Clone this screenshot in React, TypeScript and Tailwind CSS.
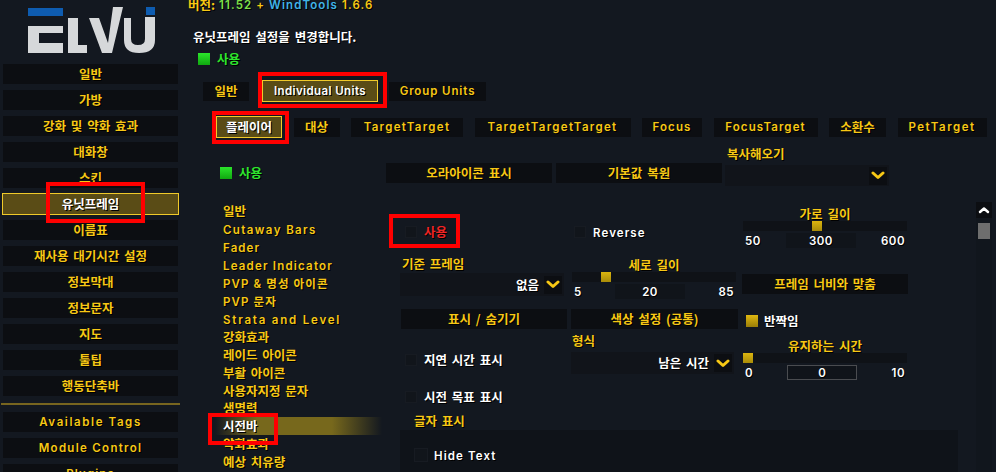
import React from "react";

const KR = '"Noto Sans CJK KR", sans-serif';
const gold = "text-[#f7c815]";

function T({ children, c = gold, en = false, className = "" }: { children: React.ReactNode; c?: string; en?: boolean; className?: string }) {
  return (
    <span
      className={`${c} ${en ? "tracking-[1.1px] font-semibold text-[11.5px]" : "font-bold text-[12.5px] [word-spacing:2px]"} leading-[14px] whitespace-nowrap [text-shadow:1px_1px_0_#000] ${className}`}
      style={{ fontFamily: en ? '"Inter", "Noto Sans CJK KR", sans-serif' : '"Noto Sans CJK KR", sans-serif' }}
    >
      {children}
    </span>
  );
}

function NavItem({ label, en, active, track }: { label: string; en?: boolean; active?: boolean; track?: string }) {
  if (active) {
    return (
      <div className="mx-[2px] mb-[5px] -mt-[1px] flex h-[22px] w-[177px] shrink-0 items-center justify-center border border-[#f0ca2a] bg-[#5a4c16]">
        <T c="text-white">{label}</T>
      </div>
    );
  }
  return (
    <div className="mx-[3px] mb-[6px] flex h-[20px] w-[175px] shrink-0 items-center justify-center bg-[#0c0e12]">
      <T en={en} className={track}>{label}</T>
    </div>
  );
}

function Tab({ label, w, en, active, track }: { label: string; w: string; en?: boolean; active?: boolean; track?: string }) {
  return (
    <div
      className={`${w} flex shrink-0 items-center justify-center ${active ? "h-[22px] border border-[#f0ca2a] bg-[#5a4c16]" : "h-[19px] bg-[#0c0e12]"}`}
    >
      <T en={en} c={active ? "text-white" : gold} className={track}>{label}</T>
    </div>
  );
}

function Check({ on, size = "size-[12px]" }: { on?: "green" | "gold"; size?: string }) {
  const cls =
    on === "green"
      ? "bg-gradient-to-b from-[#2be52b] to-[#0fa80f]"
      : on === "gold"
        ? "bg-gradient-to-b from-[#e0b810] to-[#9a7e08]"
        : "bg-[#11151b] border border-[#171b22]";
  return <div className={`${size} shrink-0 ${cls}`} />;
}

function Chevron() {
  return (
    <div className="flex h-[18px] w-[18px] items-center justify-center bg-[#0c0e12]">
      <svg width="14" height="9" viewBox="0 0 14 9" fill="none">
        <path d="M2 2 L7 6.5 L12 2" stroke="#f7c815" strokeWidth="3" strokeLinecap="round" strokeLinejoin="round" />
      </svg>
    </div>
  );
}

function Dropdown({ value, w, h }: { value?: string; w: string; h: string }) {
  return (
    <div className={`${w} ${h} flex items-center justify-end gap-[5px] bg-[#11141a] pr-[2px]`}>
      {value && <T c="text-white">{value}</T>}
      <Chevron />
    </div>
  );
}

function Btn({ label, w = "w-[166px]" }: { label: string; w?: string }) {
  return (
    <div className={`${w} flex h-[20px] shrink-0 items-center justify-center bg-[#0c0e12]`}>
      <T>{label}</T>
    </div>
  );
}

function Label({ children, className = "" }: { children: React.ReactNode; className?: string }) {
  return (
    <div className={`flex h-[14px] items-center ${className}`}>
      <T>{children}</T>
    </div>
  );
}

function Slider({ title, min, mid, max, thumb, bordered }: { title: string; min: string; mid: string; max: string; thumb: string; bordered?: boolean }) {
  return (
    <div className="flex w-[164px] flex-col items-stretch">
      <div className="flex h-[14px] justify-center">
        <T>{title}</T>
      </div>
      <div className="relative h-[10px] bg-[#0f1217]">
        <div className={`absolute top-0 h-[10px] w-[10px] bg-gradient-to-b from-[#dcb50f] to-[#a98c09] ${thumb}`} />
      </div>
      <div className="mt-[2px] flex h-[15px] items-center justify-between px-[2px]">
        <T c="text-white" en className="!tracking-[0.5px]">{min}</T>
        <div className={`flex h-[15px] w-[70px] items-center justify-center ${bordered ? "border border-[#4a4c50] bg-[#10141a]" : "bg-[#10141a]"}`}>
          <T c="text-white" en className="!tracking-[0.5px]">{mid}</T>
        </div>
        <T c="text-white" en className="!tracking-[0.5px]">{max}</T>
      </div>
    </div>
  );
}

function Opt({ label, en, c = "text-white", on, gap = "gap-[7px]" }: { label: string; en?: boolean; c?: string; on?: "gold"; gap?: string }) {
  return (
    <div className={`flex h-[12px] items-center ${gap}`}>
      <Check on={on} />
      <T c={c} en={en} className={en ? "pt-[2px]" : ""}>{label}</T>
    </div>
  );
}

const nav1 = ["일반", "가방", "강화 및 약화 효과", "대화창", "스킨"];
const nav2 = ["이름표", "재사용 대기시간 설정", "정보막대", "정보문자", "지도", "툴팁", "행동단축바"];
const tree: [string, boolean, string?][] = [
  ["일반", false],
  ["Cutaway Bars", true, "!tracking-[1.4px] pt-[1px]"],
  ["Fader", true, "pt-[1px]"],
  ["Leader Indicator", true, "!tracking-[1.2px] pt-[1px]"],
  ["PVP & 명성 아이콘", true, "pt-[1px]"],
  ["PVP 문자", true, "pt-[1px]"],
  ["Strata and Level", true, "!tracking-[1.8px] pt-[1px]"],
  ["강화효과", false],
  ["레이드 아이콘", false],
  ["부활 아이콘", false],
  ["사용자지정 문자", false],
  ["생명력", false],
];

export default function App() {
  return (
    <div className="relative flex h-[472px] w-[996px] overflow-hidden bg-[#131820]" style={{ fontFamily: KR }}>
      {/* sidebar */}
      <aside className="flex w-[188px] shrink-0 flex-col">
        <div className="flex h-[64px] shrink-0 items-start pl-[28px] pt-[5px]">
          <svg width="128" height="50" viewBox="0 0 128 50">
            <rect x="0" y="3" width="35" height="8" fill="#0e5cb0" />
            <path d="M0 21 H35 V28 H11 V38 H35 V48 H0 Z" fill="#d6d8da" />
            <path d="M40 13 H50 V40 H59 V48 H40 Z" fill="#d6d8da" />
            <path d="M61 13 H71 L80 38 L85 2 H95 L84 48 H74 Z" fill="#d6d8da" />
            <path d="M96 13 H103 V34 Q103 40 110 40 Q117 40 117 34 V12 H127 V35 Q127 48 111 48 Q96 48 96 35 Z" fill="#d6d8da" />
            <rect x="118" y="2" width="9" height="8" fill="#0e5cb0" />
          </svg>
        </div>
        {nav1.map((l) => <NavItem key={l} label={l} />)}
        <NavItem label="유닛프레임" active />
        {nav2.map((l) => <NavItem key={l} label={l} />)}
        <div className="mx-[1px] mb-[7px] mt-[1px] h-[2px] w-[179px] shrink-0 bg-[#77651f]" />
        <NavItem label="Available Tags" en track="!tracking-[1.6px]" />
        <NavItem label="Module Control" en track="!tracking-[1.3px]" />
        <NavItem label="Plugins" en />
      </aside>

      {/* main */}
      <main className="flex min-w-0 flex-1 flex-col">
        <div className="flex h-[11px] items-end">
          <div className="-mb-[1px] flex gap-[4px]">
            <T>버전:</T>
            <T c="text-[#7fe04a]" en>11.52</T>
            <T en>+</T>
            <T c="text-[#3fb4e8]" en>WindTools</T>
            <T en>1.6.6</T>
          </div>
        </div>
        <div className="ml-[5px] mt-[19px] flex h-[14px] items-center">
          <T c="text-white">유닛프레임 설정을 변경합니다.</T>
        </div>
        <div className="ml-[10px] mt-[8px] flex h-[14px] items-center gap-[7px]">
          <Check on="green" />
          <T c="text-[#2ee62e]">사용</T>
        </div>
        <div className="ml-[15px] mt-[14px] flex h-[22px] items-center">
          <Tab label="일반" w="w-[46px]" />
          <div className="w-[13px]" />
          <Tab label="Individual Units" w="w-[116px]" en active track="!tracking-[0.4px]" />
          <div className="w-[11px]" />
          <Tab label="Group Units" w="w-[97px]" en track="!tracking-[0.9px]" />
        </div>
        <div className="ml-[28px] mt-[14px] flex h-[22px] items-center gap-[11.5px]">
          <Tab label="플레이어" w="w-[66px]" active />
          <Tab label="대상" w="w-[46px]" />
          <Tab label="TargetTarget" w="w-[112px]" en track="!tracking-[1.3px]" />
          <Tab label="TargetTargetTarget" w="w-[156px]" en track="!tracking-[1.3px]" />
          <Tab label="Focus" w="w-[60px]" en />
          <Tab label="FocusTarget" w="w-[104px]" en />
          <Tab label="소환수" w="w-[57px]" />
          <Tab label="PetTarget" w="w-[89px]" en track="!tracking-[1.5px]" />
        </div>

        <div className="flex flex-1">
          {/* tree column */}
          <div className="flex w-[198px] shrink-0 flex-col pl-[32px]">
            <div className="mt-[29px] flex h-[12px] items-center gap-[7px]">
              <Check on="green" />
              <T c="text-[#2ee62e]">사용</T>
            </div>
            <div className="mt-[23px] flex flex-col pl-[3px]">
              {tree.map(([l, en, tr]) => (
                <div key={l} className={`flex h-[18px] items-center ${l === "생명력" ? "-mt-[1px]" : ""}`}>
                  <T en={en} className={tr}>{l}</T>
                </div>
              ))}
              <div className="-ml-[8px] flex h-[18px] w-[167px] items-center bg-[linear-gradient(90deg,#131820_0%,#77681c_25%,#77681c_70%,#131820_100%)] pl-[8px]">
                <T c="text-white">시전바</T>
              </div>
              <div className="flex h-[18px] items-center"><T>약화효과</T></div>
              <div className="flex h-[18px] items-center"><T>예상 치유량</T></div>
            </div>
          </div>

          {/* options */}
          <div className="flex w-[590px] shrink-0 flex-col">
            {/* top row */}
            <div className="flex h-[67px] shrink-0 items-start">
              <div className="mt-[25px] flex gap-[4px]">
                <Btn label="오라아이콘 표시" />
                <Btn label="기본값 복원" />
              </div>
              <div className="ml-[3px] mt-[9px] flex flex-col">
                <Label className="ml-[2px]">복사해오기</Label>
                <div className="mt-[4px]"><Dropdown w="w-[164px]" h="h-[21px]" /></div>
              </div>
            </div>
            {/* three columns */}
            <div className="flex h-[211px] shrink-0 pl-[14px]">
              <div className="flex w-[171px] flex-col">
                <div className="ml-[5px] mt-[21px]"><Opt label="사용" c="text-[#f02525]" /></div>
                <Label className="ml-[2px] mt-[19px]">기준 프레임</Label>
                <div className="mt-[2px]"><Dropdown value="없음" w="w-[164px]" h="h-[23px]" /></div>
                <div className="ml-[1px] mt-[13px]"><Btn label="표시 / 숨기기" /></div>
                <div className="ml-[5px] mt-[25px]"><Opt label="지연 시간 표시" /></div>
                <div className="ml-[5px] mt-[25px]"><Opt label="시전 목표 표시" /></div>
              </div>
              <div className="flex w-[172px] flex-col">
                <div className="ml-[3px] mt-[21px]"><Opt label="Reverse" en /></div>
                <div className="ml-[1px] mt-[20px]">
                  <Slider title="세로 길이" min="5" mid="20" max="85" thumb="left-[29px]" />
                </div>
                <div className="mt-[10px]"><Btn label="색상 설정 (공통)" w="w-[167px]" /></div>
                <Label className="ml-[1px] mt-[5px]">형식</Label>
                <div className="mt-[4px]"><Dropdown value="남은 시간" w="w-[163px]" h="h-[22px]" /></div>
              </div>
              <div className="flex w-[166px] flex-col">
                <div className="mt-[2px]">
                  <Slider title="가로 길이" min="50" mid="300" max="600" thumb="left-[69px]" />
                </div>
                <div className="-ml-[1px] mt-[26px]"><Btn label="프레임 너비와 맞춤" /></div>
                <div className="ml-[3px] mt-[21px]"><Opt label="반짝임" on="gold" gap="gap-[6px]" /></div>
                <div className="mt-[12px]">
                  <Slider title="유지하는 시간" min="0" mid="0" max="10" thumb="left-0" bordered />
                </div>
              </div>
            </div>
            <Label className="ml-[28px] -mt-[2px]">글자 표시</Label>
            <div className="ml-[14px] mt-[2px] flex h-[42px] w-[558px] shrink-0 items-start bg-[#0f1319] pl-[14px] pt-[17px]">
              <div className="flex items-center gap-[6px]">
                <Check size="size-[14px]" />
                <T c="text-white" en className="pt-[2px]">Hide Text</T>
              </div>
            </div>
          </div>

          {/* scrollbar */}
          <div className="mt-[64px] flex w-[16px] shrink-0 flex-col items-center bg-[#11161d]">
            <div className="flex h-[16px] w-[16px] items-center justify-center bg-[#0c0e12]">
              <svg width="12" height="8" viewBox="0 0 12 8" fill="none">
                <path d="M2 6 L6 2.5 L10 6" stroke="#fff" strokeWidth="2.5" strokeLinecap="round" strokeLinejoin="round" />
              </svg>
            </div>
            <div className="mt-[5px] h-[16px] w-[12px] bg-[#6e6e6e]" />
          </div>
        </div>
      </main>

      {/* red annotations */}
      <div className="absolute left-[46px] top-[182px] h-[41px] w-[99px] border-[4px] border-[#ff0000]" />
      <div className="absolute left-[258px] top-[72px] h-[36px] w-[129px] border-[4px] border-[#ff0000]" />
      <div className="absolute left-[212px] top-[111px] h-[33px] w-[77px] border-[4px] border-[#ff0000]" />
      <div className="absolute left-[389px] top-[214px] h-[34px] w-[71px] border-[4px] border-[#ff0000]" />
      <div className="absolute left-[208px] top-[413px] h-[32px] w-[70px] border-[4px] border-[#ff0000]" />
    </div>
  );
}
